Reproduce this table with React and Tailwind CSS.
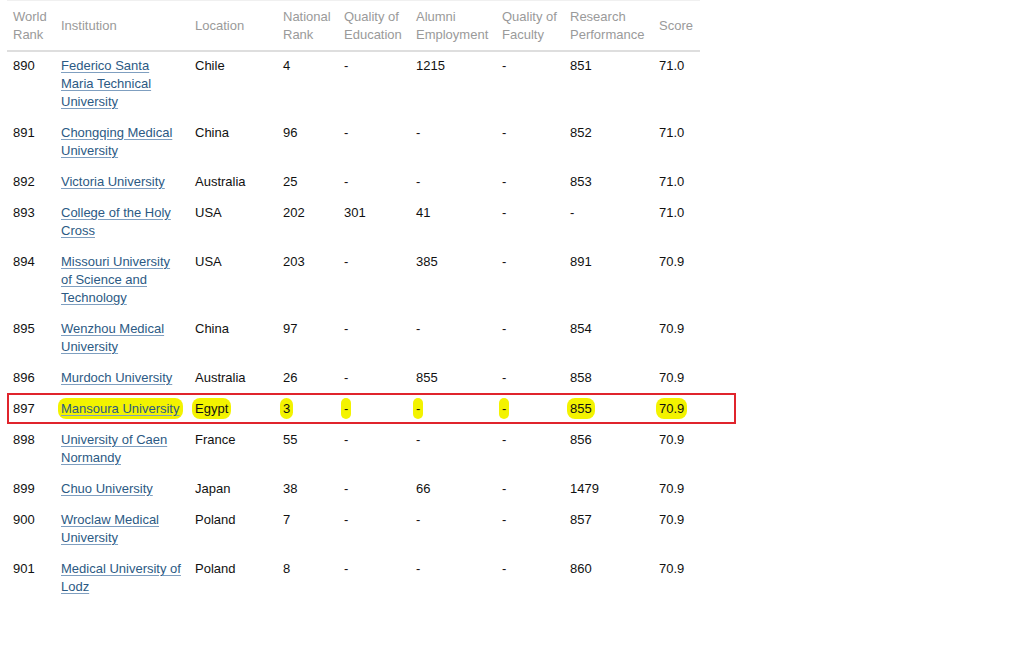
import React from "react";

const rows = [
  { rank: "890", name: "Federico Santa Maria Technical University", loc: "Chile", nat: "4", edu: "-", alumni: "1215", fac: "-", res: "851", score: "71.0" },
  { rank: "891", name: "Chongqing Medical University", loc: "China", nat: "96", edu: "-", alumni: "-", fac: "-", res: "852", score: "71.0" },
  { rank: "892", name: "Victoria University", loc: "Australia", nat: "25", edu: "-", alumni: "-", fac: "-", res: "853", score: "71.0" },
  { rank: "893", name: "College of the Holy Cross", loc: "USA", nat: "202", edu: "301", alumni: "41", fac: "-", res: "-", score: "71.0" },
  { rank: "894", name: "Missouri University of Science and Technology", loc: "USA", nat: "203", edu: "-", alumni: "385", fac: "-", res: "891", score: "70.9" },
  { rank: "895", name: "Wenzhou Medical University", loc: "China", nat: "97", edu: "-", alumni: "-", fac: "-", res: "854", score: "70.9" },
  { rank: "896", name: "Murdoch University", loc: "Australia", nat: "26", edu: "-", alumni: "855", fac: "-", res: "858", score: "70.9" },
  { rank: "897", name: "Mansoura University", loc: "Egypt", nat: "3", edu: "-", alumni: "-", fac: "-", res: "855", score: "70.9", mark: true },
  { rank: "898", name: "University of Caen Normandy", loc: "France", nat: "55", edu: "-", alumni: "-", fac: "-", res: "856", score: "70.9" },
  { rank: "899", name: "Chuo University", loc: "Japan", nat: "38", edu: "-", alumni: "66", fac: "-", res: "1479", score: "70.9" },
  { rank: "900", name: "Wroclaw Medical University", loc: "Poland", nat: "7", edu: "-", alumni: "-", fac: "-", res: "857", score: "70.9" },
  { rank: "901", name: "Medical University of Lodz", loc: "Poland", nat: "8", edu: "-", alumni: "-", fac: "-", res: "860", score: "70.9" },
];

const headers = [
  ["World", "Rank", "w-[48px]"],
  ["Institution", null, "w-[134px]"],
  ["Location", null, "w-[88px]"],
  ["National", "Rank", "w-[61px]"],
  ["Quality of", "Education", "w-[72px]"],
  ["Alumni", "Employment", "w-[86px]"],
  ["Quality of", "Faculty", "w-[68px]"],
  ["Research", "Performance", "w-[89px]"],
  ["Score", null, "w-[47px]"],
];

// yellow marker used on the highlighted row (padding cancelled by negative margin so text keeps its place)
const Hl = ({ on, children }) =>
  on ? (
    <span className="bg-[#f3f300] rounded-[8px] px-[3px] -mx-[3px] py-[3px] whitespace-nowrap">{children}</span>
  ) : (
    children
  );

export default function App() {
  return (
    <div className="bg-white min-h-[651px] w-[1024px] font-['Liberation_Sans',Arial,sans-serif] text-[13px] leading-[18px] text-[#111]">
      <div className="relative ml-[7px] w-[693px] pb-[2px]">
        <table className="table-fixed w-[693px] border-collapse border-t border-t-[#f0f0f0] border-b border-b-[#f0f0f0]">
          <thead>
            <tr className="border-b-2 border-[#dedede]">
              {headers.map(([a, b, w]) => (
                <th key={a + w} className={`${w} text-left font-normal text-[#9a9a9a] align-middle pl-[6px] pr-0 pt-[7px] pb-[6px] whitespace-nowrap`}>
                  {a}
                  {b && <br />}
                  {b}
                </th>
              ))}
            </tr>
          </thead>
          <tbody>
            {rows.map((r) => (
              <tr key={r.rank} className="align-top">
                <td className="pl-[6px] pt-[5px] pb-[8px]">{r.rank}</td>
                <td className="pl-[6px] pr-[5px] pt-[5px] pb-[8px]">
                  <Hl on={r.mark}>
                    <a href="#" className="text-[#2c5a84] underline decoration-[#7f9fc0] underline-offset-[2px]">{r.name}</a>
                  </Hl>
                </td>
                <td className="pl-[6px] pt-[5px] pb-[8px]"><Hl on={r.mark}>{r.loc}</Hl></td>
                <td className="pl-[6px] pt-[5px] pb-[8px]"><Hl on={r.mark}>{r.nat}</Hl></td>
                <td className="pl-[6px] pt-[5px] pb-[8px]"><Hl on={r.mark}>{r.edu}</Hl></td>
                <td className="pl-[6px] pt-[5px] pb-[8px]"><Hl on={r.mark}>{r.alumni}</Hl></td>
                <td className="pl-[6px] pt-[5px] pb-[8px]"><Hl on={r.mark}>{r.fac}</Hl></td>
                <td className="pl-[6px] pt-[5px] pb-[8px]"><Hl on={r.mark}>{r.res}</Hl></td>
                <td className="pl-[6px] pt-[5px] pb-[8px]"><Hl on={r.mark}>{r.score}</Hl></td>
              </tr>
            ))}
            <tr>
              <td colSpan={9} className="h-[52px]"></td>
            </tr>
          </tbody>
        </table>
        {/* red annotation box around Mansoura row */}
        <div className="absolute left-0 top-[393px] w-[729px] h-[31px] border-2 border-[#e0242c] pointer-events-none"></div>
      </div>
    </div>
  );
}
